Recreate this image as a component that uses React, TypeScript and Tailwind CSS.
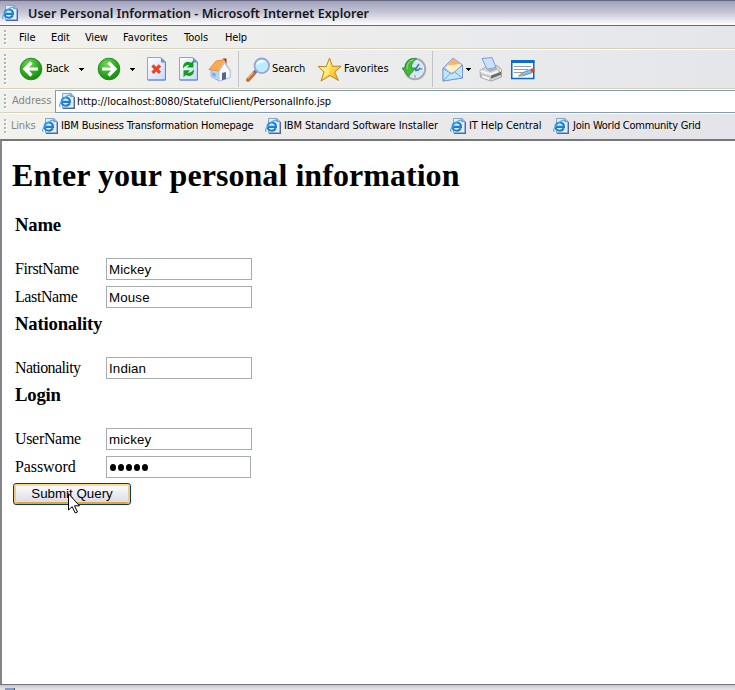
import React from 'react';

function PageIcon() {
  return (
    <svg width="16" height="16" viewBox="0 0 16 16" className="shrink-0">
      <path d="M3.5.5h8.5l3 3v11.5H3.5z" fill="#e3edfc" stroke="#8aa2d0" />
      <path d="M12 .5v3h3" fill="#9fb6e0" stroke="#6f86b8" strokeWidth=".8" />
      <path d="M15.4 4v11.4H4" fill="none" stroke="#53669a" strokeWidth="1.2" />
      <path d="M10.8 10.3c-.8 1.6-2.2 2.4-4 2.4-2.5 0-4.2-1.6-4.2-4s1.7-4.2 4.3-4.2 4.2 1.8 4.1 4.4H3.2" fill="none" stroke="#1b7fd2" strokeWidth="2.1" />
      <path d="M1.2 13.8C-.6 12 3 6.2 7.7 3.2c3-1.8 4.9-1.5 4 .8" fill="none" stroke="#4caeee" strokeWidth="1.2" />
    </svg>
  );
}

function Grip({ tall = false }: { tall?: boolean }) {
  return (
    <svg width="3" height={tall ? 32 : 16} className="ml-1 shrink-0">
      {Array.from({ length: tall ? 8 : 4 }, (_, i) => (
        <g key={i}>
          <rect x="1" y={i * 4 + 2} width="2" height="2" fill="#fff" />
          <rect x="0" y={i * 4 + 1} width="2" height="2" fill="#b5b4ae" />
        </g>
      ))}
    </svg>
  );
}

function RoundArrow({ forward = false }: { forward?: boolean }) {
  return (
    <svg width="24" height="24" viewBox="0 0 24 24" className="shrink-0">
      <defs>
        <radialGradient id="green" cx=".4" cy=".28" r=".75">
          <stop offset="0" stopColor="#79d65c" />
          <stop offset=".55" stopColor="#32ad22" />
          <stop offset="1" stopColor="#168710" />
        </radialGradient>
      </defs>
      <circle cx="12" cy="12" r="10.8" fill="url(#green)" stroke="#258c22" />
      <path d="M19 12H6.5M12.5 5.5L6 12l6.5 6.5" fill="none" stroke="#fff" strokeWidth="3.2" transform={forward ? 'rotate(180 12 12)' : undefined} />
    </svg>
  );
}

function Caret() {
  return (
    <svg width="5" height="3" className="shrink-0" shapeRendering="crispEdges">
      <path d="M0 0h5v1H4v1H3v1H2V2H1V1H0z" />
    </svg>
  );
}

function Sheet({ kind }: { kind: 'stop' | 'refresh' }) {
  return (
    <svg width="20" height="24" viewBox="0 0 20 24" className="shrink-0">
      <defs>
        <linearGradient id="sheet" x2="1" y2="1">
          <stop stopColor="#fff" />
          <stop offset="1" stopColor="#c4dcfb" />
        </linearGradient>
      </defs>
      <path d="M.5.5h13.5l4.5 4.5V23H.5z" fill="url(#sheet)" stroke="#8ba5dc" />
      <path d="M14 .5v5h5z" fill="#6f91c9" />
      <path d="M18.4 5v18H1" fill="none" stroke="#657fbd" />
      {kind === 'stop' ? (
        <path d="M5.5 8.3l7.5 7.5M13 8.3l-7.5 7.5" stroke="#f4401c" strokeWidth="3.3" />
      ) : (
        <g fill="#12a019">
          <path d="M4 11.5C3.5 6 8 3 12 5.8l2.5-2.3v7H8l2.3-2.4C8 7.5 6 9 4 11.5z" />
          <path d="M15 12.3c.5 5.5-4 8.5-8 5.7l-2.5 2.3v-7H11l-2.3 2.4c2.3.6 4.3-.9 6.3-3.4z" />
        </g>
      )}
    </svg>
  );
}

function Home() {
  return (
    <svg width="24" height="25" viewBox="0 0 24 25" className="shrink-0">
      <path d="M15 1.5h3.5V8H15z" fill="#a32c21" />
      <path d="M3 12.5l8 1 5-7 6 8v6l-11 3.5-8-4.5z" fill="#b5d6fa" stroke="#8ea9d6" strokeWidth=".8" />
      <path d="M11 14l5.5-8 5.5 7.5v7L11 24z" fill="#f6faff" stroke="#a9bbd5" strokeWidth=".7" />
      <path d="M.8 12.5L8 4l8-1.5 1 1.5-6.5 10z" fill="#fbab4b" stroke="#e8872f" strokeWidth=".8" />
      <path d="M10.5 14.5l6-9.5 6.5 9.5" fill="none" stroke="#c2c5d2" strokeWidth="1.5" />
      <path d="M14 16l4-1v7l-4 1.2z" fill="#53678e" />
      <path d="M4.5 15.5l3 1v3.5l-3-1.5z" fill="#7fa5df" />
    </svg>
  );
}

function SearchIcon() {
  return (
    <svg width="25" height="25" viewBox="0 0 25 25" className="shrink-0">
      <path d="M2 22.8l7-7.8" stroke="#c76d37" strokeWidth="4" strokeLinecap="round" />
      <path d="M1.5 21.5l6.5-7" stroke="#f4ae72" strokeWidth="1.5" />
      <path d="M8 16l3-3" stroke="#6574ae" strokeWidth="3" />
      <circle cx="15.8" cy="8.8" r="7.3" fill="#bcecff" stroke="#94a5d8" strokeWidth="1.8" />
      <path d="M10.5 8c0-6 8-6 9-3-4 0-6 1-9 3z" fill="#f7fdff" />
    </svg>
  );
}

function Star() {
  return (
    <svg width="25" height="25" viewBox="0 0 25 25" className="shrink-0">
      <defs>
        <linearGradient id="star" x2="1" y2="1">
          <stop stopColor="#fffbb5" />
          <stop offset=".5" stopColor="#ffdc48" />
          <stop offset="1" stopColor="#f4a818" />
        </linearGradient>
      </defs>
      <path d="M12.5 1l3 8.3 8.7-.1-6.5 5.8 3.8 8.5-8.5-5L4 24l3-9-6-5.7 8.2.4z" fill="url(#star)" stroke="#bd8328" strokeLinejoin="round" />
      <path d="M12.3 3.5l-.3 13-6.5 5.5 2.6-7.5-5-4.3 6.8.5z" fill="#fff8a5" opacity=".6" />
    </svg>
  );
}

function History() {
  return (
    <svg width="25" height="24" viewBox="0 0 25 24" className="shrink-0">
      <circle cx="13" cy="12" r="10" fill="#cdeafa" stroke="#a8abb3" strokeWidth="2.5" />
      <circle cx="13" cy="12" r="8.6" fill="none" stroke="#eff8ff" />
      <path d="M13 18.5v2M20.5 12h-2" stroke="#df725f" strokeWidth="1.5" />
      <path d="M13 13l4-6M13 13.5c2 0 4-.5 5.5-2.5" fill="none" stroke="#4d6e96" strokeWidth="1.5" />
      <path d="M14.5 2C7 0 3 5 3.3 11H0l6.5 8.5 7-8.5H9.7c-.6-4 1.3-6.6 4.8-9z" fill="#47b738" stroke="#258034" strokeWidth=".8" />
      <path d="M11.5 2.8C7.2 3.5 5 7 5.2 12" fill="none" stroke="#a1df86" />
    </svg>
  );
}

function Mail() {
  return (
    <svg width="22" height="25" viewBox="0 0 22 25" className="shrink-0">
      <path d="M1 11L11 1l9 6.5v13.5L1 24z" fill="#acc9f5" stroke="#8f9ed0" />
      <path d="M3.5 10.5l8-8 7.5 5-3 7-8 1z" fill="#fff0c8" />
      <path d="M5.5 8.5l6-6.5 7 5z" fill="#f5b562" />
      <path d="M1 11.5l9 5.5 10.5-9v13L1 24z" fill="#baeaff" stroke="#8293cd" />
      <path d="M1 24l7.5-8M12.5 15l8 6" fill="none" stroke="#7c9bdc" />
    </svg>
  );
}

function Printer() {
  return (
    <svg width="24" height="25" viewBox="0 0 24 25" className="shrink-0">
      <path d="M1 13.5l7-4 10-1 4.5 4v7.5l-10 4-11-4z" fill="#d9dadb" stroke="#a1a3a8" />
      <path d="M3 1.5l10-1 4 10-9 1.8z" fill="#c9e3ff" stroke="#7d98d8" />
      <path d="M1.5 14l10.5 3.2 10-4" fill="none" stroke="#fafafa" strokeWidth="1.7" />
      <path d="M12 18.5l10-3.7v3l-10 4z" fill="#686e73" />
      <path d="M3 17.5l9 3-2 3-8-3z" fill="#f6f6f6" stroke="#999" strokeWidth=".7" />
      <path d="M7 12.7l10-2 2 1.3-8 3z" fill="#afb1b6" />
      <circle cx="20" cy="14" r=".8" fill="#3aba46" />
    </svg>
  );
}

function EditIcon() {
  return (
    <svg width="25" height="20" viewBox="0 0 25 20" className="shrink-0">
      <rect x=".75" y="1" width="22" height="17.5" fill="#f8fbff" stroke="#0868cf" strokeWidth="1.5" />
      <path d="M0 0h23.5v3H0z" fill="#0b6bd5" />
      <path d="M3 6.5h17M3 9.5h14M3 12.5h8" stroke="#96999e" />
      <path d="M7.5 16l3.5-3 8.5-3.5 2 3-9.5 3.3z" fill="#83c3ef" stroke="#376ba5" strokeWidth=".7" />
      <path d="M7 16.3l3.5-3.3 1.8 2.8z" fill="#ed9e29" />
      <circle cx="21.7" cy="10.3" r="2" fill="#e44726" />
    </svg>
  );
}

function FormRow({ label, value, tracking, password = false }: { label: string; value: string; tracking: string; password?: boolean }) {
  return (
    <div className="flex h-7 items-center">
      <label className={`w-[91px] text-[16px] leading-5 ${tracking}`}>{label}</label>
      <div className={`flex h-[22px] items-center border border-[#a5acb2] pt-px pl-[2px] font-['Liberation_Sans',Arial,sans-serif] text-[13.33px] tracking-[0.14px] ${password ? 'w-[145px]' : 'w-[146px]'}`}>
        {password ? (
          <svg width="42" height="9" role="img" aria-label={value}>
            {[4, 12, 20, 28, 36].map((x) => <ellipse key={x} cx={x} cy="4.5" rx="3" ry="3.5" />)}
          </svg>
        ) : value}
      </div>
    </div>
  );
}

function Heading({ children }: { children: React.ReactNode }) {
  return <h2 className="h-[43px] pt-[2px] text-[18.72px] leading-[22px] font-bold tracking-[-0.2px]">{children}</h2>;
}

export default function App() {
  return (
    <main className="flex h-[690px] w-[735px] flex-col overflow-hidden bg-[#ececeb] font-['DejaVu_Sans_Condensed','DejaVu_Sans',sans-serif] text-[11px] font-stretch-condensed text-black">
      <header className="flex h-[26px] shrink-0 items-center border-t border-b border-[#66667e] bg-linear-to-b from-[#a0a0bc] via-[#c8c8d8] to-white pl-[2px]">
        <PageIcon />
        <span className="ml-[10px] pt-[2px] whitespace-nowrap font-['Noto_Sans',sans-serif] text-[12.6px] font-semibold text-[#17171b]">User Personal Information - Microsoft Internet Explorer</span>
      </header>
      <nav className="flex h-[23px] shrink-0 items-center border-b border-[#d8d2bd] bg-linear-to-r from-[#f2f2ed] to-[#e5e6ea]">
        <Grip />
        <div className="ml-3 flex pt-[2px]">
          <span className="w-8">File</span>
          <span className="w-[34px] tracking-[-0.1px]">Edit</span>
          <span className="w-[38px] tracking-[-0.2px]">View</span>
          <span className="w-[61px]">Favorites</span>
          <span className="w-[41px]">Tools</span>
          <span className="tracking-[-0.2px]">Help</span>
        </div>
      </nav>
      <section className="flex h-10 shrink-0 items-center border-t border-b border-t-white border-b-[#d8d2bd] bg-linear-to-r from-[#f2f2ed] to-[#e5e6ea]">
        <Grip tall />
        <div className="ml-3 flex w-[78px] items-center"><RoundArrow /><span className="ml-[3px] w-[33px] pt-px tracking-[-0.3px]">Back</span><Caret /></div>
        <div className="flex w-[50px] items-center gap-[9px]"><RoundArrow forward /><Caret /></div>
        <div className="flex w-8"><Sheet kind="stop" /></div>
        <div className="flex w-[29px]"><Sheet kind="refresh" /></div>
        <Home />
        <div className="mr-[7px] ml-[6px] h-9 w-px bg-[#c2c3ca]" />
        <SearchIcon />
        <span className="ml-[1px] w-[45px] pt-px tracking-[-0.15px]">Search</span>
        <Star />
        <span className="ml-[2px] w-[58px] pt-px">Favorites</span>
        <History />
        <div className="mr-[9px] ml-[5px] h-9 w-px bg-[#c2c3ca]" />
        <Mail />
        <div className="mr-[8px] ml-[2px] pt-px"><Caret /></div>
        <Printer />
        <div className="ml-[8px] pt-px"><EditIcon /></div>
      </section>
      <section className="flex h-6 shrink-0 items-center border-t border-b border-t-white border-b-[#d8d2bd] bg-linear-to-r from-[#f2f2ed] to-[#e5e6ea]">
        <Grip />
        <span className="ml-[5px] w-[43px] pt-px text-[#858583]">Address</span>
        <div className="flex h-[23px] flex-1 items-center border border-r-0 border-[#7f9db9] bg-white pl-[3px]">
          <PageIcon /><span className="ml-[2px] pt-[2px] tracking-[-0.02px]">http://localhost:8080/StatefulClient/PersonalInfo.jsp</span>
        </div>
      </section>
      <section className="flex h-[26px] shrink-0 items-center border-t border-white bg-linear-to-r from-[#f2f2ed] to-[#e4e4e9] pb-[2px] whitespace-nowrap">
        <Grip />
        <span className="ml-[4px] w-[31px] pt-px text-[#858583] tracking-[-0.2px]">Links</span>
        <div className="flex w-[223px] items-center gap-[3px]"><PageIcon /><span className="pt-px tracking-[-0.19px]">IBM Business Transformation Homepage</span></div>
        <div className="flex w-[185px] items-center gap-[3px]"><PageIcon /><span className="pt-px tracking-[-0.07px]">IBM Standard Software Installer</span></div>
        <div className="flex w-[103px] items-center gap-[3px]"><PageIcon /><span className="pt-px tracking-[-0.1px]">IT Help Central</span></div>
        <div className="flex items-center gap-[4px]"><PageIcon /><span className="pt-px tracking-[-0.25px]">Join World Community Grid</span></div>
      </section>
      <section className="h-[545px] shrink-0 border-t-2 border-l-2 border-t-[#77777b] border-l-[#858589] bg-white pl-[10px] font-['Liberation_Serif','Times_New_Roman',serif]">
        <h1 className="h-[71px] pt-4 text-[32px] leading-[37px] font-bold tracking-[0.05px] whitespace-nowrap">Enter your personal information</h1>
        <form className="pl-[3px]" onSubmit={(event) => event.preventDefault()}>
          <Heading>Name</Heading>
          <FormRow label="FirstName" value="Mickey" tracking="tracking-[-0.42px]" />
          <FormRow label="LastName" value="Mouse" tracking="tracking-[-0.4px]" />
          <Heading>Nationality</Heading>
          <FormRow label="Nationality" value="Indian" tracking="tracking-[-0.6px]" />
          <Heading>Login</Heading>
          <FormRow label="UserName" value="mickey" tracking="tracking-[-0.33px]" />
          <FormRow label="Password" value="password" tracking="tracking-[-0.1px]" password />
          <button className="relative mt-[2px] -ml-[2px] block h-[22px] w-[118px] rounded-[3px] border border-[#003c74] bg-linear-to-b from-white to-[#d7d8e8] font-['Liberation_Sans',Arial,sans-serif] text-[13.33px] leading-5 shadow-[inset_0_2px_0_#ffdb91,inset_2px_0_0_#fbc779,inset_-2px_0_0_#fbc779,inset_0_-2px_0_#eda42d]">
            Submit Query
            <svg width="13" height="21" viewBox="0 0 13 21" className="absolute top-[9px] left-[54px]">
              <path d="M.5.8v16.2l3.7-3.3 3 6.3 2.3-1-3-6.2h5z" fill="white" stroke="black" />
            </svg>
          </button>
        </form>
      </section>
      <footer className="h-[6px] shrink-0 border-t border-[#77777f] bg-linear-to-b from-[#c5c5cd] to-[#eaeaec] pl-[5px]">
        <div className="mt-[3px] h-[2px] w-[10px] border-r border-[#55555c] bg-[#829bc9]" />
      </footer>
    </main>
  );
}
